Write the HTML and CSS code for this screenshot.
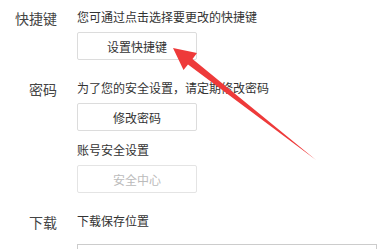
FILE: index.html
```html
<!DOCTYPE html>
<html lang="zh-CN">
<head>
    <meta charset="UTF-8">
    <title>设置</title>
    <link rel="stylesheet" href="styles.css">
</head>
<body>
    <div class="settings">
        <div class="row">
            <div class="label">快捷键</div>
            <div class="content">
                <p class="desc">您可通过点击选择要更改的快捷键</p>
                <button class="btn">设置快捷键</button>
            </div>
        </div>
        <div class="row">
            <div class="label">密码</div>
            <div class="content">
                <p class="desc">为了您的安全设置，请定期修改密码</p>
                <button class="btn">修改密码</button>
                <p class="desc sub">账号安全设置</p>
                <button class="btn" disabled>安全中心</button>
            </div>
        </div>
        <div class="row">
            <div class="label">下载</div>
            <div class="content">
                <p class="desc">下载保存位置</p>
                <div class="path-box"></div>
            </div>
        </div>
    </div>

    <!-- red annotation arrow -->
    <svg class="arrow" width="384" height="249" viewBox="0 0 384 249">
        <polygon points="173,48 197,53 192.5,59 316,160 188,64.5 183.5,70" fill="#ee3a3a"/>
    </svg>
</body>
</html>
```

FILE: styles.css
```css
* {
    margin: 0;
    padding: 0;
    box-sizing: border-box;
}

body {
    width: 384px;
    height: 249px;
    overflow: hidden;
    background: #fff;
    font-family: "Noto Sans CJK SC", "Microsoft YaHei", sans-serif;
    position: relative;
}

.settings {
    display: flex;
    flex-direction: column;
    gap: 19px;
    padding-top: 8px;
}

.row {
    display: grid;
    grid-template-columns: 57px 1fr;
    column-gap: 20px;
}

.label {
    text-align: right;
    font-size: 14px;
    line-height: 20px;
    color: #444;
}

.content {
    display: flex;
    flex-direction: column;
    align-items: flex-start;
}

.desc {
    font-size: 12px;
    line-height: 18px;
    color: #333;
}

.desc.sub {
    margin-top: 10px;
}

.btn {
    margin-top: 6px;
    width: 120px;
    height: 28px;
    border: 1px solid #dcdcdc;
    border-radius: 2px;
    background: #fff;
    font-family: inherit;
    font-size: 12px;
    color: #333;
}

.btn:disabled {
    color: #bbb;
    border-color: #e4e4e4;
}

.path-box {
    margin-top: 14px;
    width: 300px;
    height: 26px;
    border: 1px solid #ccc;
}

.arrow {
    position: absolute;
    top: 0;
    left: 0;
}
```
